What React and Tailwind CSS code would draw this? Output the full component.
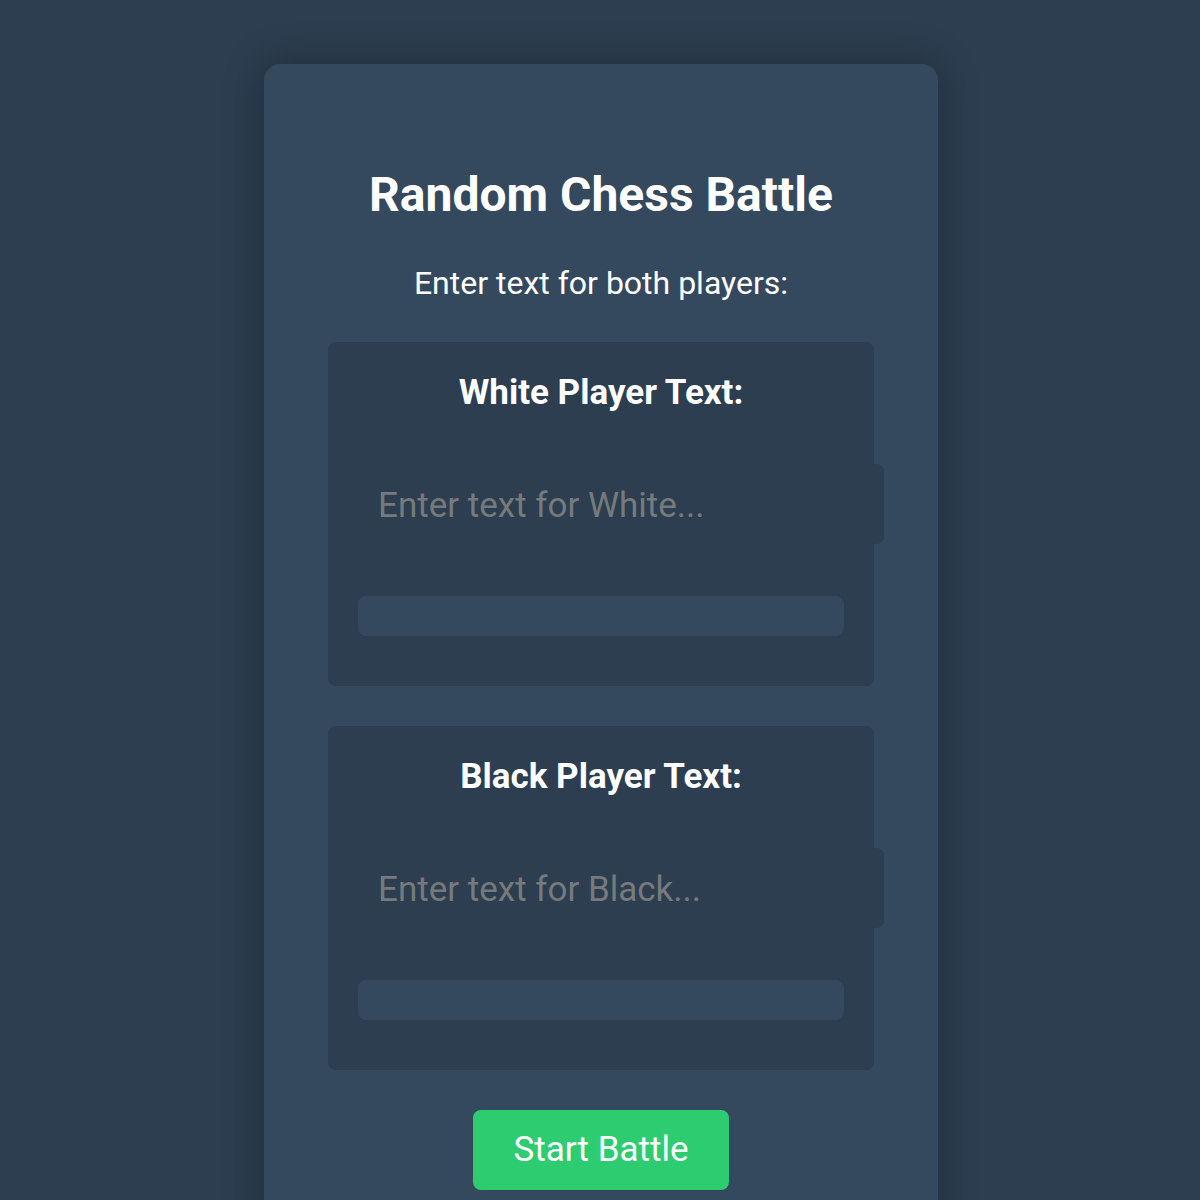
import { useState } from "react";

function PlayerBox({ label, placeholder, value, onChange }) {
  return (
    <div className="bg-[#2c3e50] rounded-lg px-[30px] pt-[33px] pb-[50px]">
      <h2 className="text-[35px] leading-none font-bold text-white text-center">
        {label}
      </h2>
      <textarea
        value={value}
        onChange={(e) => onChange(e.target.value)}
        placeholder={placeholder}
        className="block mt-[54px] w-full box-content h-[40px] px-5 pt-[16px] pb-[24px] bg-[#2c3e50] rounded-lg text-[35px] text-white placeholder:text-[#777a7c] resize-none outline-none overflow-hidden"
      />
      <div className="mt-[52px] h-[40px] w-full rounded-lg bg-[#34495e]" />
    </div>
  );
}

export default function App() {
  const [white, setWhite] = useState("");
  const [black, setBlack] = useState("");

  return (
    <div
      className="min-h-[1200px] h-[1200px] overflow-hidden bg-[#2c3e50] pt-16 pl-[2px]"
      style={{ fontFamily: "Roboto, 'Noto Sans', sans-serif" }}
    >
      <div className="mx-auto w-[674px] rounded-2xl bg-[#34495e] shadow-[0_0_40px_rgba(0,0,0,0.3)] px-16 pt-[107px] pb-16">
        <h1 className="text-[48px] leading-none font-bold text-white text-center">
          Random Chess Battle
        </h1>
        <p className="mt-[48px] text-[32px] leading-none text-white text-center">
          Enter text for both players:
        </p>
        <div className="mt-[43px] flex flex-col gap-10">
          <PlayerBox
            label="White Player Text:"
            placeholder="Enter text for White..."
            value={white}
            onChange={setWhite}
          />
          <PlayerBox
            label="Black Player Text:"
            placeholder="Enter text for Black..."
            value={black}
            onChange={setBlack}
          />
        </div>
        <div className="mt-10 flex justify-center">
          <button className="w-[256px] h-[80px] rounded-lg bg-[#2ecc71] text-white text-[35px]">
            Start Battle
          </button>
        </div>
      </div>
    </div>
  );
}
